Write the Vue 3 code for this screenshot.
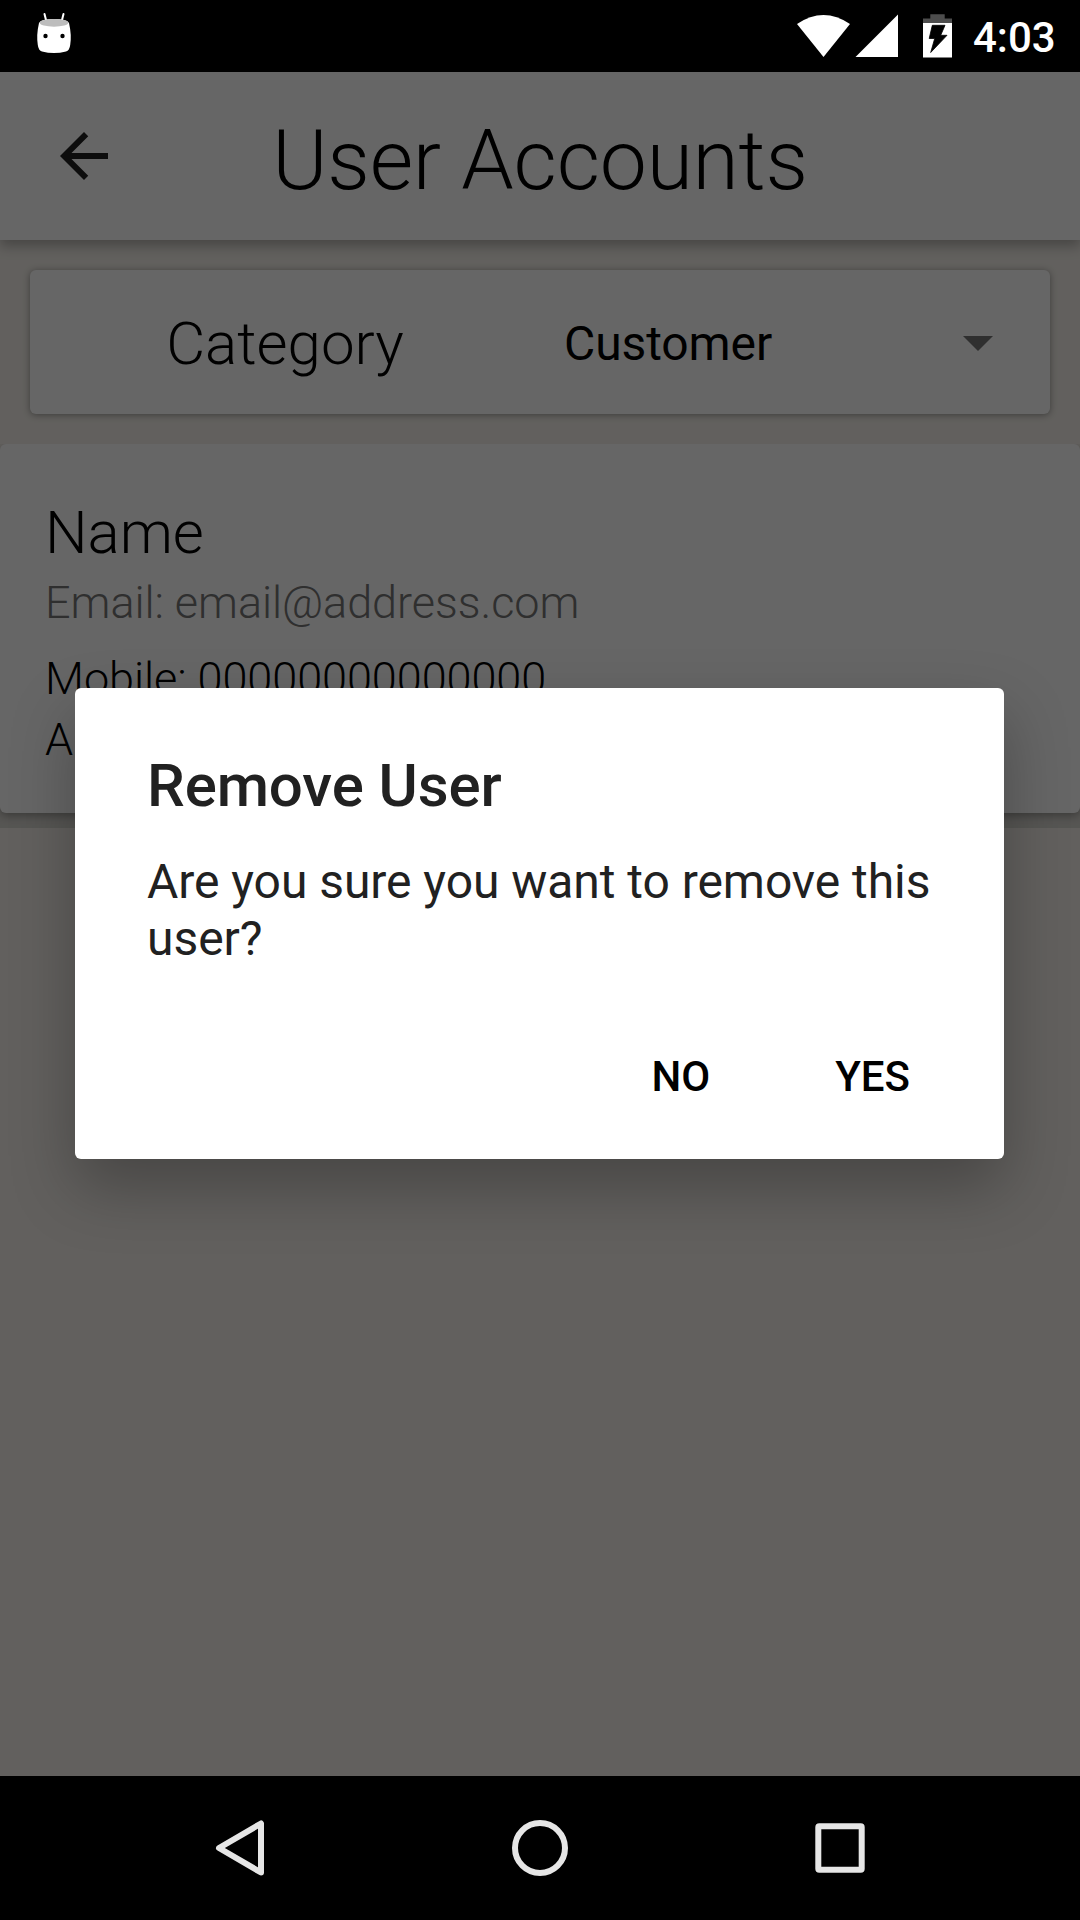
<script setup>
const user = {
  name: 'Name',
  email: 'email@address.com',
  mobile: '00000000000000',
  address: 'A',
}
</script>

<template>
  <div class="screen">
    <header class="status">
      <svg class="droid" width="36" height="44" viewBox="0 0 36 44">
        <path d="M8.500 2l2 8M27.500 2l-2 8" stroke="#fff" stroke-width="2" stroke-linecap="round" />
        <path d="M3 11Q.200 23 1.800 33Q2.500 38.500 6 39.500Q18 42.500 30 39.500Q33.500 38.500 34.200 33Q35.800 23 33 11Q31 7 18 7Q5 7 3 11Z" fill="#fff" />
        <ellipse cx="18" cy="10.800" rx="14.400" ry="3.900" fill="#bdbdbd" />
        <circle cx="9.500" cy="24" r="2.200" />
        <circle cx="26.500" cy="24" r="2.200" />
      </svg>
      <div class="indicators">
        <svg width="158" height="48" viewBox="0 0 158 48">
          <path d="M0 12Q26.500-6 53 12L26.500 45Z" fill="#fff" />
          <path d="M58.500 45H101V2.500Z" fill="#fff" />
          <path d="M126 11V6.500h7.300V2.300h14.400v4.200H155V11Z" fill="#4d4d4d" />
          <path d="M126 11h29v34.600h-29z" fill="#fff" />
          <path d="M135.300 13.300h12.700l-4.300 10h6.300L133.700 40.500l4-14h-5.500Z" fill="#000" stroke="#000" stroke-width=".8" />
        </svg>
        <span class="clock">4:03</span>
      </div>
    </header>

    <main class="app">
      <div class="toolbar">
        <svg class="back" width="72" height="72" viewBox="0 0 24 24">
          <path d="M20 11H7.830l5.590-5.590L12 4l-8 8 8 8 1.410-1.410L7.830 13H20v-2z" fill="#212121" />
        </svg>
        <h1>User Accounts</h1>
      </div>

      <section class="filter">
        <span class="filter-label">Category</span>
        <div class="select">
          <span>Customer</span>
          <i class="caret"></i>
        </div>
      </section>

      <div class="list">
        <article class="user">
          <h2>{{ user.name }}</h2>
          <p class="email">Email: {{ user.email }}</p>
          <p>Mobile: {{ user.mobile }}</p>
          <p>{{ user.address }}</p>
        </article>
      </div>

      <div class="scrim">
        <div class="dialog" role="dialog">
          <h3>Remove User</h3>
          <p>Are you sure you want to remove this user?</p>
          <div class="actions">
            <button>NO</button>
            <button>YES</button>
          </div>
        </div>
      </div>
    </main>

    <nav class="nav">
      <svg width="60" height="60" viewBox="0 0 60 60"><path d="M51 5.500V54.500L9 30Z" /></svg>
      <svg width="60" height="60" viewBox="0 0 60 60"><circle cx="30" cy="30" r="25" /></svg>
      <svg width="60" height="60" viewBox="0 0 60 60"><rect x="8.300" y="8.300" width="43.400" height="43.400" rx="1" /></svg>
    </nav>
  </div>
</template>

<style>
body {
  margin: 0;
  background: #000;
}
</style>

<style scoped>
* {
  box-sizing: border-box;
}
h1, h2, h3, p {
  margin: 0;
}
.screen {
  width: 1080px;
  height: 1920px;
  display: flex;
  flex-direction: column;
  overflow: hidden;
  font-family: Roboto, "Noto Sans", sans-serif;
  color: #000;
}
.status {
  height: 72px;
  flex: none;
  background: #000;
  display: flex;
  justify-content: space-between;
  padding: 12px 24px 0 36px;
}
.indicators {
  display: flex;
  gap: 18px;
}
.clock {
  color: #fff;
  font-size: 42px;
  font-weight: 500;
  line-height: 52px;
  width: 83px;
}
.app {
  position: relative;
  flex: 1;
  background: #f4f0ea;
}
.toolbar {
  height: 168px;
  background: #fff;
  box-shadow: 0 6px 12px rgba(0, 0, 0, 0.28);
  display: grid;
  grid-template-columns: 72px 1fr 72px;
  align-items: center;
  padding: 0 48px;
}
h1 {
  font-size: 84px;
  font-weight: 300;
  line-height: 98px;
  letter-spacing: -0.2px;
  text-align: center;
  padding-top: 9px;
}
.filter {
  height: 144px;
  margin: 30px;
  border-radius: 6px;
  background: #fff;
  box-shadow: 0 1px 7px rgba(0, 0, 0, 0.38);
  display: grid;
  grid-template-columns: 510px 1fr;
  align-items: center;
}
.filter-label {
  font-size: 60px;
  font-weight: 300;
  line-height: 70px;
  text-align: center;
  padding-top: 4px;
}
.select {
  display: flex;
  justify-content: space-between;
  align-items: center;
  padding: 3px 57px 0 24px;
  font-size: 48px;
  line-height: 56px;
  letter-spacing: -0.1px;
}
.caret {
  border: 15px solid transparent;
  border-top-color: #757575;
  border-bottom: 0;
}
.list {
  height: 384px;
  overflow: hidden;
  background: linear-gradient(#f4f0ea 50%, #d8d6d0 50%);
}
.user {
  height: 369px;
  border-radius: 6px;
  background: #fff;
  box-shadow: 0 3px 8px rgba(0, 0, 0, 0.3);
  padding: 54px 45px 0;
  font-weight: 300;
  font-size: 45px;
  line-height: 61px;
  letter-spacing: -0.06px;
}
h2 {
  font-size: 60px;
  font-weight: 300;
  line-height: 70px;
}
.email {
  color: #757575;
  line-height: 53px;
  margin: 8px 0 19px;
}
.scrim {
  position: absolute;
  inset: 0;
  background: rgba(0, 0, 0, 0.6);
  display: flex;
  align-items: flex-start;
  justify-content: center;
  padding-top: 616px;
}
.dialog {
  width: 929px;
  height: 471px;
  margin-right: 1px;
  border-radius: 6px;
  background: #fff;
  box-shadow: 0 28px 64px rgba(0, 0, 0, 0.28);
  color: #212121;
  padding: 63px 70px 0 72px;
}
h3 {
  font-size: 60px;
  font-weight: 500;
  line-height: 70px;
  letter-spacing: -0.1px;
}
.dialog p {
  font-size: 48px;
  line-height: 57px;
  letter-spacing: -0.05px;
  margin-top: 32px;
}
.actions {
  display: flex;
  justify-content: flex-end;
  gap: 77px;
  margin-top: 62px;
}
button {
  border: 0;
  padding: 24px;
  margin: -1px 0;
  background: none;
  font: 500 42px/50px Roboto, sans-serif;
  color: #000;
}
.nav {
  height: 144px;
  flex: none;
  background: #000;
  display: flex;
  justify-content: center;
  align-items: center;
  gap: 240px;
}
.nav svg {
  fill: none;
  stroke: #e6e6e6;
  stroke-width: 6;
  stroke-linejoin: round;
}
</style>
